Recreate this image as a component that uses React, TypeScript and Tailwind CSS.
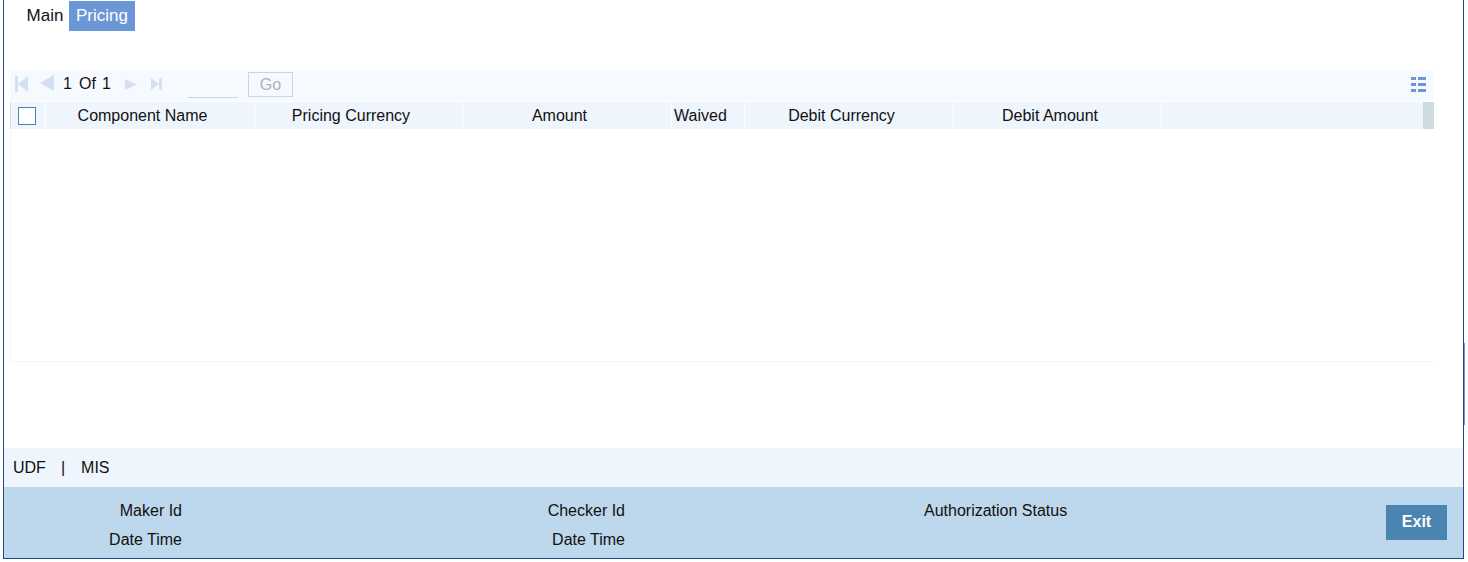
const cols: [string, string][] = [
  ["Component Name", "w-[209px]"],
  ["Pricing Currency", "w-[208px]"],
  ["Amount", "w-[209px]"],
  ["Waived", "w-[73px]"],
  ["Debit Currency", "w-[209px]"],
  ["Debit Amount", "w-[208px]"],
];

const pager = "#d3e0f2";

export default function App() {
  return (
    <div className="relative w-[1468px] h-[562px] bg-white font-['Liberation_Sans',Arial,sans-serif] text-[16px] text-[#111] overflow-hidden">
      <div className="ml-[3px] w-[1461px] h-[559px] border-l border-r border-b border-[#24478a] flex flex-col">
        <div className="flex h-[31px] pl-[17px] pt-px items-stretch shrink-0">
          <div className="w-[48px] flex items-center justify-center pb-px text-[17px]">Main</div>
          <div className="w-[66px] bg-[#6c97d6] text-white flex items-center justify-center pb-px text-[17px]">Pricing</div>
        </div>
        <div className="mt-[39px] mx-[6px] h-[292px] w-[1424px] flex flex-col border-b border-[#f3f3fb] shrink-0">
          <div className="h-[31px] bg-[#f6faff] flex items-start pl-[5px] shrink-0">
            <svg width="14" height="16" viewBox="0 0 14 16" className="mt-[6px] shrink-0" fill={pager}>
              <rect x="0" y="0" width="3" height="16" />
              <polygon points="13,0 13,16 3,8" />
            </svg>
            <svg width="14" height="16" viewBox="0 0 14 16" className="mt-[5px] ml-[11px] shrink-0" fill={pager}>
              <polygon points="14,0 14,16 0,8" />
            </svg>
            <span className="ml-[9px] w-[16px] mt-[5px] leading-[18px]">1</span>
            <span className="w-[23px] mt-[5px] leading-[18px]">Of</span>
            <span className="w-[13px] mt-[5px] leading-[18px]">1</span>
            <svg width="12" height="11" viewBox="0 0 12 11" className="mt-[9px] ml-[10px] shrink-0" fill={pager}>
              <polygon points="0,0 12,5.5 0,11" />
            </svg>
            <svg width="11" height="12" viewBox="0 0 11 12" className="mt-[8px] ml-[14px] shrink-0" fill={pager}>
              <polygon points="0,0 8,6 0,12" />
              <rect x="8" y="0" width="3" height="12" />
            </svg>
            <div className="ml-[26px] w-[50px] h-[28px] border-b border-[#cbd6e2] shrink-0" />
            <div className="ml-[10px] mt-[2px] w-[45px] h-[25px] border border-[#c9d5e2] text-[#a9b1bb] flex items-center justify-center shrink-0">Go</div>
            <svg width="15" height="15" viewBox="0 0 15 15" className="ml-auto mr-[8px] mt-[7px] shrink-0" fill="#6c97d6">
              <rect x="0" y="0" width="5" height="3" />
              <rect x="7" y="0" width="8" height="3" />
              <rect x="0" y="6" width="5" height="3" />
              <rect x="7" y="6" width="8" height="3" />
              <rect x="0" y="12" width="5" height="3" />
              <rect x="7" y="12" width="8" height="3" />
            </svg>
          </div>
          <div className="mt-px h-[27px] flex bg-white shrink-0">
            <div className="w-[35px] h-full bg-[#eff5fd] border-l border-[#d5dfea] flex items-center pl-[7px] shrink-0">
              <div className="w-[18px] h-[18px] bg-white border border-[#4a85ae]" />
            </div>
            {cols.map(([name, w]) => (
              <div key={name} className={`${w} h-full bg-[#eff5fd] border-l border-white flex items-center justify-center pr-[15px] shrink-0`}>
                {name}
              </div>
            ))}
            <div className="flex-1 bg-[#eff5fd] border-l border-white" />
            <div className="w-[11px] bg-[#cddcdf] shrink-0" />
          </div>
          <div className="flex-1 border-l border-[#f6f6fc]" />
        </div>
        <div className="mt-[86px] h-[39px] bg-[#eef5fd] flex items-center pl-[9px] shrink-0">
          <span>UDF</span>
          <span className="ml-[15px]">|</span>
          <span className="ml-[16px]">MIS</span>
        </div>
        <div className="flex-1 bg-[#bdd7ec] flex">
          <div className="w-[178px] shrink-0 text-right pt-[15px] leading-[18px]">
            <div>Maker Id</div>
            <div className="mt-[11px]">Date Time</div>
          </div>
          <div className="w-[443px] shrink-0 text-right pt-[15px] leading-[18px]">
            <div>Checker Id</div>
            <div className="mt-[11px]">Date Time</div>
          </div>
          <div className="ml-[299px] pt-[15px] leading-[18px] whitespace-nowrap shrink-0">Authorization Status</div>
          <div className="ml-auto mr-[16px] mt-[18px] w-[61px] h-[35px] bg-[#4a85b2] text-white font-bold flex items-center justify-center pb-[2px] shrink-0">Exit</div>
        </div>
      </div>
      <div className="absolute left-[1464px] top-[343px] w-px h-[82px] bg-[#6c97d6]" />
    </div>
  );
}
